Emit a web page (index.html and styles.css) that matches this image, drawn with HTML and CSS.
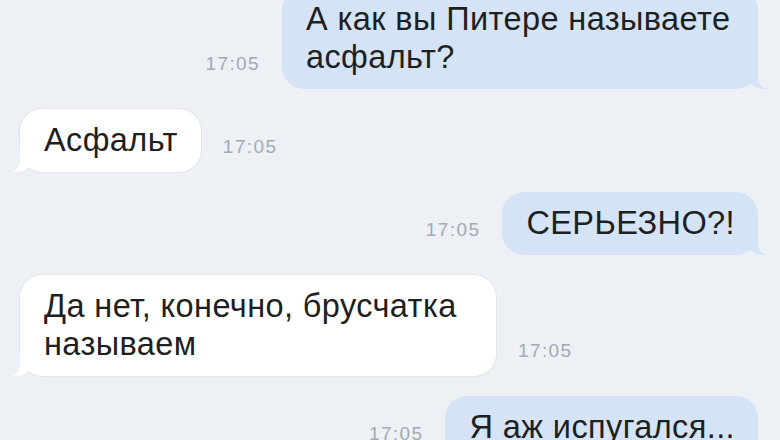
FILE: index.html
```html
<html>
<head>
    <meta charset="UTF-8">
    <meta name="viewport" content="width=device-width, initial-scale=1.0">
    <title>Чат</title>
    <link rel="stylesheet" href="styles.css">
</head>
<body>

<div class="chat">
    <div class="row out first">
        <span class="time">17:05</span>
        <div class="bubble">А как вы Питере называете асфальт?</div>
    </div>
    <div class="row in">
        <div class="bubble">Асфальт</div>
        <span class="time">17:05</span>
    </div>
    <div class="row out">
        <span class="time">17:05</span>
        <div class="bubble">СЕРЬЕЗНО?!</div>
    </div>
    <div class="row in">
        <div class="bubble">Да нет, конечно, брусчатка называем</div>
        <span class="time">17:05</span>
    </div>
    <div class="row out">
        <span class="time">17:05</span>
        <div class="bubble">Я аж испугался...</div>
    </div>
</div>

</body>
</html>
```

FILE: styles.css
```css
* {
    margin: 0;
    padding: 0;
    box-sizing: border-box;
}
body {
    font-family: "Liberation Sans", Arial, sans-serif;
    background-color: #edf0f5;
    height: 440px;
    overflow: hidden;
}
.chat {
    display: flex;
    flex-direction: column;
    gap: 20px;
    padding: 0 22px 0 20px;
}
.row {
    display: flex;
    align-items: flex-end;
    gap: 22px;
}
.row.first {
    margin-top: -12px;
}
.out {
    justify-content: flex-end;
}
.bubble {
    position: relative;
    max-width: 476px;
    padding: 12px 23px 13px 24px;
    border-radius: 22px;
    font-size: 32.5px;
    line-height: 38px;
    letter-spacing: 0.4px;
    color: #1e1f21;
}
.out .bubble {
    background-color: #d5e3f6;
}
.in .bubble {
    background-color: #fff;
    box-shadow: 0 0 0 1px #e1e5eb;
}
.time {
    font-size: 19px;
    line-height: 20px;
    letter-spacing: 1.4px;
    color: #a3aab4;
    margin-bottom: 15px;
}
.bubble::before,
.bubble::after {
    content: "";
    position: absolute;
    bottom: 0;
    height: 24px;
}
.out .bubble::before {
    right: -10px;
    width: 22px;
    background-color: #d5e3f6;
    border-bottom-left-radius: 18px 15px;
}
.out .bubble::after {
    right: -28px;
    width: 28px;
    background-color: #edf0f5;
    border-bottom-left-radius: 11px;
}
.in .bubble::before {
    left: -8px;
    width: 22px;
    background-color: #fff;
    border-bottom-right-radius: 18px 15px;
}
.in .bubble::after {
    left: -28px;
    width: 28px;
    background-color: #edf0f5;
    border-bottom-right-radius: 11px;
}
```
